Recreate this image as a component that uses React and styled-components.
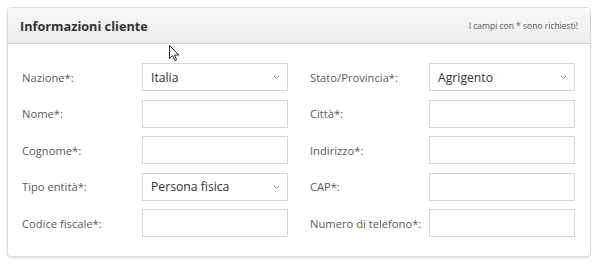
import React from "react";
import styled, { createGlobalStyle } from "styled-components";

const GlobalStyle = createGlobalStyle`
  body {
    margin: 0;
    background: #fff;
    font-family: "Open Sans", "Liberation Sans", sans-serif;
  }
`;

const Page = styled.div`
  position: relative;
  padding: 7px 9px 7px 7px;
`;

const Card = styled.div`
  border: 1px solid #dcdcdc;
  border-radius: 4px;
  background: #fff;
  box-shadow: 0 1px 2px rgba(0, 0, 0, 0.12);
  overflow: hidden;
`;

const Header = styled.div`
  height: 35px;
  display: flex;
  align-items: center;
  justify-content: space-between;
  padding: 0 12px 0 12px;
  background: linear-gradient(#f8f8f8, #ececec);
  border-bottom: 1px solid #cfcfcf;
`;

const Title = styled.h2`
  margin: 0;
  font-size: 12.7px;
  font-weight: 700;
  color: #333;
`;

const Note = styled.span`
  font-size: 8.5px;
  color: #5d5370;
`;

const Grid = styled.div`
  display: grid;
  grid-template-columns: 120px 146px 22px 119px 146px;
  row-gap: 8.5px;
  align-items: center;
  padding: 19px 15px 19px 14px;
`;

const Label = styled.label`
  font-size: 11.2px;
  color: #5a5a5a;
  white-space: nowrap;
  grid-column: ${(p) => (p.right ? 4 : 1)};
`;

const Field = styled.div`
  position: relative;
  grid-column: ${(p) => (p.right ? 5 : 2)};
  height: 28px;
  box-sizing: border-box;
  border: 1px solid #d6d6d6;
  background: #fff;
  display: flex;
  align-items: center;
  padding: 0 8px;
  font-size: 12.2px;
  color: #333;
`;

const Chevron = styled.svg`
  position: absolute;
  right: 7px;
  top: 11px;
`;

const Cursor = styled.svg`
  position: absolute;
  left: 169px;
  top: 45px;
`;

const rows = [
  ["Nazione*:", "Italia", "Stato/Provincia*:", "Agrigento"],
  ["Nome*:", null, "Città*:", null],
  ["Cognome*:", null, "Indirizzo*:", null],
  ["Tipo entità*:", "Persona fisica", "CAP*:", null],
  ["Codice fiscale*:", null, "Numero di telefono*:", null],
];

const Input = ({ right, value }) => (
  <Field right={right}>
    {value}
    {value && (
      <Chevron width="7" height="5" viewBox="0 0 7 5">
        <path d="M1 1 L3.5 3.4 L6 1" fill="none" stroke="#888" strokeWidth="1" />
      </Chevron>
    )}
  </Field>
);

export default function App() {
  return (
    <Page>
      <GlobalStyle />
      <Card>
        <Header>
          <Title>Informazioni cliente</Title>
          <Note>I campi con * sono richiesti!</Note>
        </Header>
        <Grid>
          {rows.map(([l1, v1, l2, v2]) => (
            <React.Fragment key={l1}>
              <Label>{l1}</Label>
              <Input value={v1} />
              <Label right>{l2}</Label>
              <Input right value={v2} />
            </React.Fragment>
          ))}
        </Grid>
      </Card>
      <Cursor width="12" height="18" viewBox="0 0 12 18">
        <path
          d="M0.5 0.5 L0.5 13.5 L3.6 10.6 L5.8 15.6 L7.6 14.8 L5.5 10 L9.8 10 Z"
          fill="#fff"
          stroke="#222"
          strokeWidth="1"
          strokeLinejoin="round"
        />
      </Cursor>
    </Page>
  );
}
